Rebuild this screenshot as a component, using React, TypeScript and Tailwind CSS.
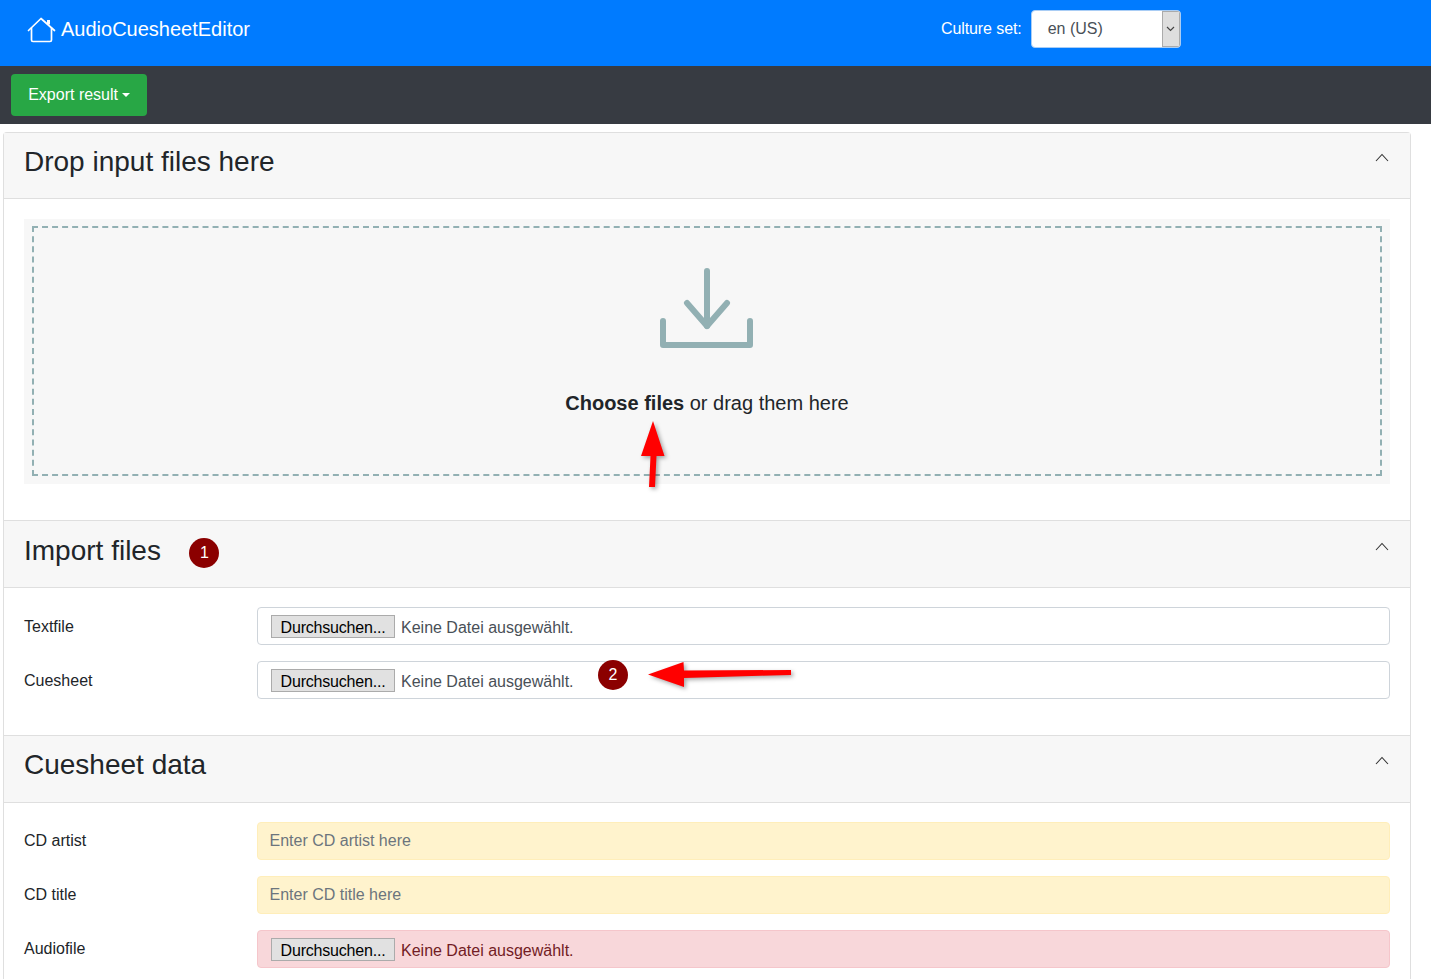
import React from "react";

function Chevron() {
  return (
    <svg width="14" height="9" viewBox="0 0 14 9" fill="none" stroke="#333" strokeWidth="1.1" className="mt-[-7px]">
      <path d="M1 8 L7 1.5 L13 8" />
    </svg>
  );
}

function CardHeader({ title, badge }: { title: string; badge?: string }) {
  return (
    <div className="flex h-[68px] items-start justify-between border-y border-[#dfdfdf] bg-[#f7f7f7] pl-5 pr-[21px] first:h-[66px] first:border-t-0">
      <div className={`flex items-center ${badge ? "pt-[12px]" : "pt-[11px]"}`}>
        <h3 className="text-[28px] leading-[36px] text-[#212529]">{title}</h3>
        {badge && <Badge className="ml-[28.5px] mt-[3px]">{badge}</Badge>}
      </div>
      <div className={badge ? "pt-[28px]" : "pt-[27px]"}>
        <Chevron />
      </div>
    </div>
  );
}

function Badge({ children, className = "" }: { children: React.ReactNode; className?: string }) {
  return (
    <span className={`flex h-[30px] w-[30px] items-center justify-center rounded-full bg-[#8b0000] text-[16px] text-white ${className}`}>
      {children}
    </span>
  );
}

function FileInput({ invalid }: { invalid?: boolean }) {
  return (
    <div
      className={`flex h-[38px] flex-1 items-center rounded-[4px] border pl-[13px] ${
        invalid ? "border-[#f5c6cb] bg-[#f8d7da] text-[#721c24]" : "border-[#ced4da] bg-white text-[#495057]"
      }`}
    >
      <span className="flex h-[23px] w-[124px] items-center justify-center border border-[#ababab] bg-[#e1e1e1] pt-[4px] text-[16px] leading-[16px] tracking-[-0.2px] text-black">
        Durchsuchen...
      </span>
      <span className="ml-[6px] pt-[4px] text-[16px]">Keine Datei ausgewählt.</span>
    </div>
  );
}

function TextInput({ placeholder }: { placeholder: string }) {
  return (
    <input
      readOnly
      placeholder={placeholder}
      className="h-[38px] flex-1 rounded-[4px] border border-[#ffeeba] bg-[#fff3cd] pl-[11.5px] pr-3 text-[16px] outline-none placeholder:text-[#6c757d]"
    />
  );
}

function Row({ label, shift, children }: { label: string; shift?: boolean; children: React.ReactNode }) {
  return (
    <div className="flex items-center">
      <label className={`w-[233px] text-[16px] leading-[24px] text-[#212529] ${shift ? "mt-[-1px]" : "mt-[2px]"}`}>{label}</label>
      {children}
    </div>
  );
}

export default function App() {
  return (
    <div className="relative h-[979px] overflow-hidden bg-white font-['Liberation_Sans',Arial,sans-serif]">
      <header className="flex h-[66px] items-center bg-[#007bff] pb-2 text-white">
        <div className="flex items-center pl-[27px]">
          <svg width="29" height="27" viewBox="0 0 29 27" fill="none" stroke="white" strokeWidth="1.7" strokeLinecap="round" strokeLinejoin="round">
            <path d="M1.5 14.5 L14 2.5 L27.5 14.5" />
            <path d="M4.5 12 V24 A1.5 1.5 0 0 0 6 25.5 H23 A1.5 1.5 0 0 0 24.5 24 V12" />
            <path d="M21.5 4 V8.5" strokeWidth="3" strokeLinecap="butt" />
          </svg>
          <span className="ml-[5px] text-[20px] leading-[30px]">AudioCuesheetEditor</span>
        </div>
        <div className="ml-[691px] flex items-center">
          <span className="text-[16px] tracking-[-0.1px]">Culture set:</span>
          <div className="ml-[9px] flex h-[38px] w-[150px] overflow-hidden rounded-[4px] border border-[#a9cdf5] bg-white">
            <span className="flex-1 pl-4 text-[16px] leading-[36px] text-[#495057]">en (US)</span>
            <span className="flex w-[18px] items-center justify-center border border-[#ababab] bg-[#dedede]">
              <svg width="9" height="6" viewBox="0 0 9 6" fill="none" stroke="#444" strokeWidth="1.2">
                <path d="M1 1 L4.5 4.5 L8 1" />
              </svg>
            </span>
          </div>
        </div>
      </header>

      <div className="flex h-[58px] items-center bg-[#373b42] pl-[11px]">
        <button className="flex h-[42px] w-[136px] items-center justify-center rounded-[4px] bg-[#28a745] text-[16px] text-white">
          Export result
          <span className="ml-[3.8px] h-0 w-0 border-x-[4.8px] border-t-[4.8px] border-x-transparent border-t-white" />
        </button>
      </div>

      <main className="ml-[3px] mr-[20px] mt-[8px] rounded-t-[4px] border-x border-t border-[#dfdfdf]">
        <CardHeader title="Drop input files here" />
        <section className="h-[321px] px-5 pt-5">
          <div className="h-[265px] bg-[#f7f7f7] px-2 pt-[7px]">
            <div className="flex h-[250px] flex-col items-center border-2 border-dashed border-[#92b0b3] pt-[40px]">
              <svg width="96" height="82" viewBox="0 0 96 82" fill="none" stroke="#92b0b3" strokeWidth="6" strokeLinecap="round" strokeLinejoin="round">
                <path d="M48 3 V58" />
                <path d="M28 35 L48 58 L68 35" />
                <path d="M4 53 V77 H91 V53" />
              </svg>
              <p className="mt-[38px] text-[20px] leading-[30px] text-[#212529]">
                <b>Choose files</b> or drag them here
              </p>
            </div>
          </div>
        </section>

        <CardHeader title="Import files" badge="1" />
        <section className="flex h-[147px] flex-col gap-4 px-5 pt-[19px]">
          <Row label="Textfile"><FileInput /></Row>
          <Row label="Cuesheet"><FileInput /></Row>
        </section>

        <CardHeader title="Cuesheet data" />
        <section className="flex flex-col gap-4 px-5 pb-5 pt-[19px]">
          <Row label="CD artist" shift><TextInput placeholder="Enter CD artist here" /></Row>
          <Row label="CD title" shift><TextInput placeholder="Enter CD title here" /></Row>
          <Row label="Audiofile" shift><FileInput invalid /></Row>
        </section>
      </main>

      <Badge className="absolute left-[598px] top-[660px]">2</Badge>

      <svg className="absolute left-[630px] top-[415px] drop-shadow-[2px_2px_2px_rgba(0,0,0,0.35)]" width="45" height="80" viewBox="0 0 45 80" fill="#ff0000">
        <path d="M23 6 L34.5 41 L26.5 41 L25 72 L19 72 L20.5 41 L11 41 Z" />
      </svg>
      <svg className="absolute left-[640px] top-[655px] drop-shadow-[2px_2px_2px_rgba(0,0,0,0.35)]" width="160" height="40" viewBox="0 0 160 40" fill="#ff0000">
        <path d="M8 19.5 L43.5 7 L44 15.5 L151 15 L151 20 L44 23 L44 32 Z" />
      </svg>
    </div>
  );
}
